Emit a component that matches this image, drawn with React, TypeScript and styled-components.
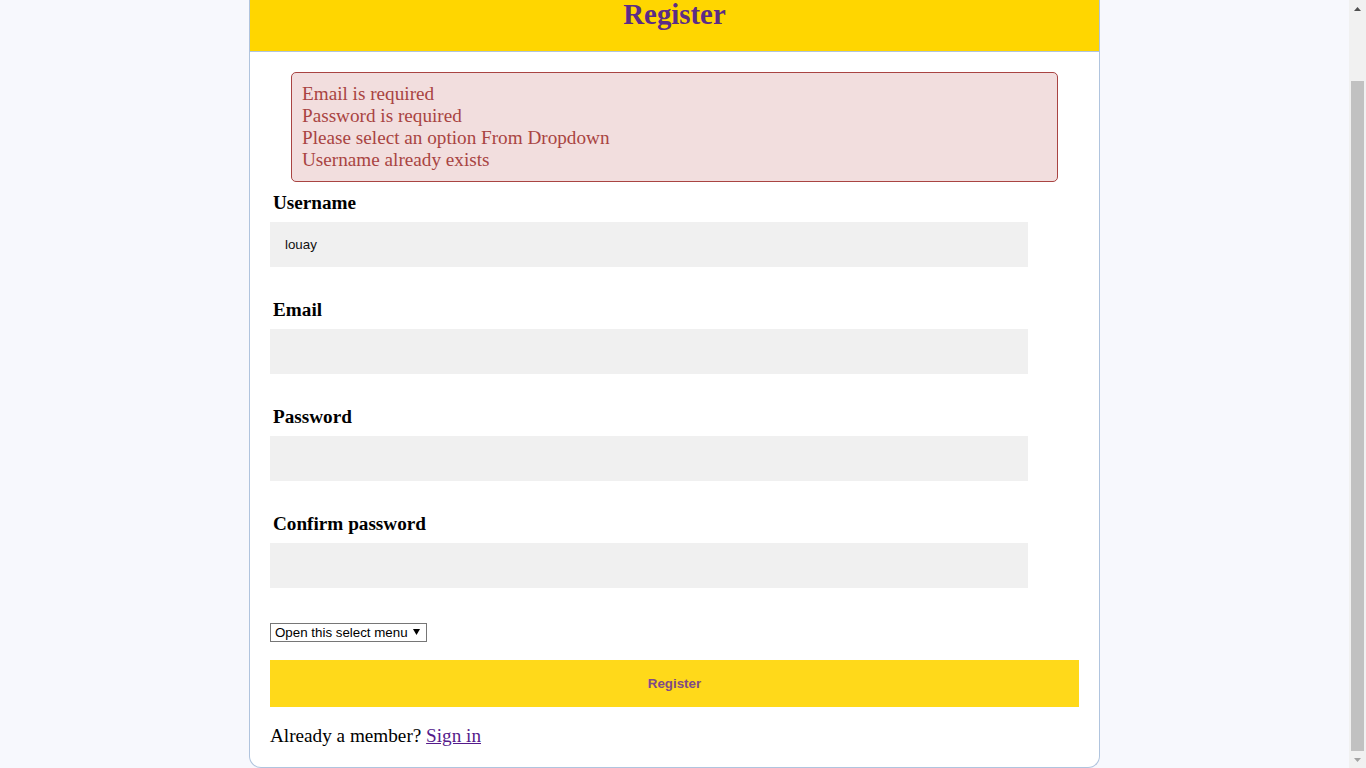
import React, { useLayoutEffect, useEffect, useRef, useState } from "react";
import styled, { createGlobalStyle } from "styled-components";

const GlobalStyle = createGlobalStyle`
  html, body {
    margin: 0;
    padding: 0;
    height: 100%;
    overflow: hidden;
    background: #f7f8fd;
  }
  body {
    font-family: "Liberation Serif", "Times New Roman", serif;
  }
  * { box-sizing: border-box; }
`;

const Shell = styled.div`
  display: flex;
  height: 100vh;
  width: 100%;
`;

const Scroller = styled.div`
  flex: 1;
  min-width: 0;
  height: 100%;
  overflow-y: scroll;
  overflow-x: hidden;
  background: #f7f8fd;
  scrollbar-width: none;
  &::-webkit-scrollbar { display: none; }
`;

const ScrollBar = styled.div`
  width: 17px;
  height: 100%;
  background: #f1f1f1;
  display: flex;
  flex-direction: column;
`;

const ScrollButton = styled.div`
  height: 17px;
  flex: none;
  display: flex;
  align-items: center;
  justify-content: center;
`;

const Track = styled.div`
  flex: 1;
  position: relative;
`;

const Thumb = styled.div`
  position: absolute;
  left: 2px;
  right: 2px;
  background: #c1c1c1;
`;

const Card = styled.div`
  width: 851px;
  margin: 0 auto;
  background: #ffffff;
  border: 1px solid #b0c4de;
  border-top: none;
  border-radius: 0 0 12px 12px;
`;

const Header = styled.header`
  background: #ffd600;
  border-bottom: 1px solid #b0c4de;
  box-sizing: content-box;
  padding-top: 71px;
  height: 53px;
  text-align: center;
`;

const Title = styled.h1`
  margin: 0;
  font-family: "Liberation Serif", "Times New Roman", serif;
  font-weight: bold;
  font-size: 28.8px;
  line-height: 33px;
  color: #5b2c86;
`;

const Body = styled.div`
  padding: 20px 20px 20px;
  display: flex;
  flex-direction: column;
`;

const Alert = styled.div`
  width: 767px;
  margin: 0 auto;
  padding: 10px;
  background: #f2dede;
  border: 1px solid #a94442;
  border-radius: 5px;
  color: #a94442;
  font-size: 19.2px;
  line-height: 22px;
`;

const AlertLine = styled.div``;

const Field = styled.div<{ $first?: boolean }>`
  display: flex;
  flex-direction: column;
  align-items: flex-start;
  margin-top: ${(p) => (p.$first ? "10px" : "32px")};
`;

const Label = styled.label`
  padding-left: 3px;
  font-weight: bold;
  font-size: 19.2px;
  line-height: 22px;
  color: #000;
  margin-bottom: 8px;
`;

const Input = styled.input`
  width: 758px;
  height: 45px;
  border: none;
  outline: none;
  background: #f0f0f0;
  padding: 0 15px;
  font-family: "Liberation Sans", Arial, sans-serif;
  font-size: 13.33px;
  color: #111;
`;

const SelectWrap = styled.span`
  position: relative;
  display: inline-block;
  align-self: flex-start;
  margin-top: 35px;
  width: 157px;
  height: 19px;
`;

const Select = styled.select`
  appearance: none;
  -webkit-appearance: none;
  display: block;
  width: 157px;
  height: 19px;
  border: 1px solid #767676;
  border-radius: 0;
  background: #fff;
  padding: 0 0 0 4px;
  margin: 0;
  font-family: "Liberation Sans", Arial, sans-serif;
  font-size: 13.33px;
  line-height: 17px;
  color: #000;
  outline: none;
`;

const Caret = styled.svg`
  position: absolute;
  right: 7px;
  top: 6px;
  width: 7px;
  height: 6px;
  pointer-events: none;
`;

const Button = styled.button`
  margin-top: 18px;
  width: 809px;
  height: 47px;
  border: none;
  background: #ffd91a;
  color: #7f4a88;
  font-family: "Liberation Sans", Arial, sans-serif;
  font-weight: bold;
  font-size: 13.33px;
  cursor: pointer;
`;

const Footer = styled.p`
  margin: 18px 0 0;
  font-size: 19.2px;
  line-height: 22px;
  color: #000;
`;

const Link = styled.a`
  color: #551a8b;
  text-decoration: underline;
`;

const fields = [
  { id: "username", label: "Username", value: "louay", type: "text" },
  { id: "email", label: "Email", value: "", type: "email" },
  { id: "password", label: "Password", value: "", type: "password" },
  { id: "confirm", label: "Confirm password", value: "", type: "password" },
];

const errors = [
  "Email is required",
  "Password is required",
  "Please select an option From Dropdown",
  "Username already exists",
];

export default function App() {
  const ref = useRef<HTMLDivElement>(null);
  const trackRef = useRef<HTMLDivElement>(null);
  const [thumb, setThumb] = useState({ top: 64, height: 670 });

  const measure = () => {
    const el = ref.current;
    const tr = trackRef.current;
    if (!el || !tr) return;
    const th = tr.clientHeight;
    const sh = el.scrollHeight || 1;
    setThumb({
      top: Math.round((el.scrollTop / sh) * th),
      height: Math.round((el.clientHeight / sh) * th),
    });
  };
  const toBottom = () => {
    const el = ref.current;
    if (el) el.scrollTop = el.scrollHeight;
    measure();
  };
  useLayoutEffect(() => {
    toBottom();
  }, []);
  useEffect(() => {
    const t = setTimeout(toBottom, 50);
    return () => clearTimeout(t);
  }, []);

  return (
    <Shell>
      <GlobalStyle />
      <Scroller ref={ref} onScroll={measure}>
        <Card>
          <Header>
            <Title>Register</Title>
          </Header>
          <Body>
            <Alert>
              {errors.map((e) => (
                <AlertLine key={e}>{e}</AlertLine>
              ))}
            </Alert>
            {fields.map((f, i) => (
              <Field key={f.id} $first={i === 0}>
                <Label htmlFor={f.id}>{f.label}</Label>
                <Input id={f.id} type={f.type} defaultValue={f.value} />
              </Field>
            ))}
            <SelectWrap>
              <Select defaultValue="">
                <option value="">Open this select menu</option>
                <option value="1">One</option>
                <option value="2">Two</option>
              </Select>
              <Caret viewBox="0 0 7 6">
                <polygon points="0,0 7,0 3.5,6" fill="#000" />
              </Caret>
            </SelectWrap>
            <Button type="button">Register</Button>
            <Footer>
              Already a member? <Link href="#">Sign in</Link>
            </Footer>
          </Body>
        </Card>
      </Scroller>
      <ScrollBar aria-hidden="true">
        <ScrollButton>
          <svg width="7" height="4" viewBox="0 0 7 4">
            <polygon points="0,4 7,4 3.5,0" fill="#505050" />
          </svg>
        </ScrollButton>
        <Track ref={trackRef}>
          <Thumb style={{ top: thumb.top, height: thumb.height }} />
        </Track>
        <ScrollButton>
          <svg width="7" height="4" viewBox="0 0 7 4">
            <polygon points="0,0 7,0 3.5,4" fill="#a3a3a3" />
          </svg>
        </ScrollButton>
      </ScrollBar>
    </Shell>
  );
}
